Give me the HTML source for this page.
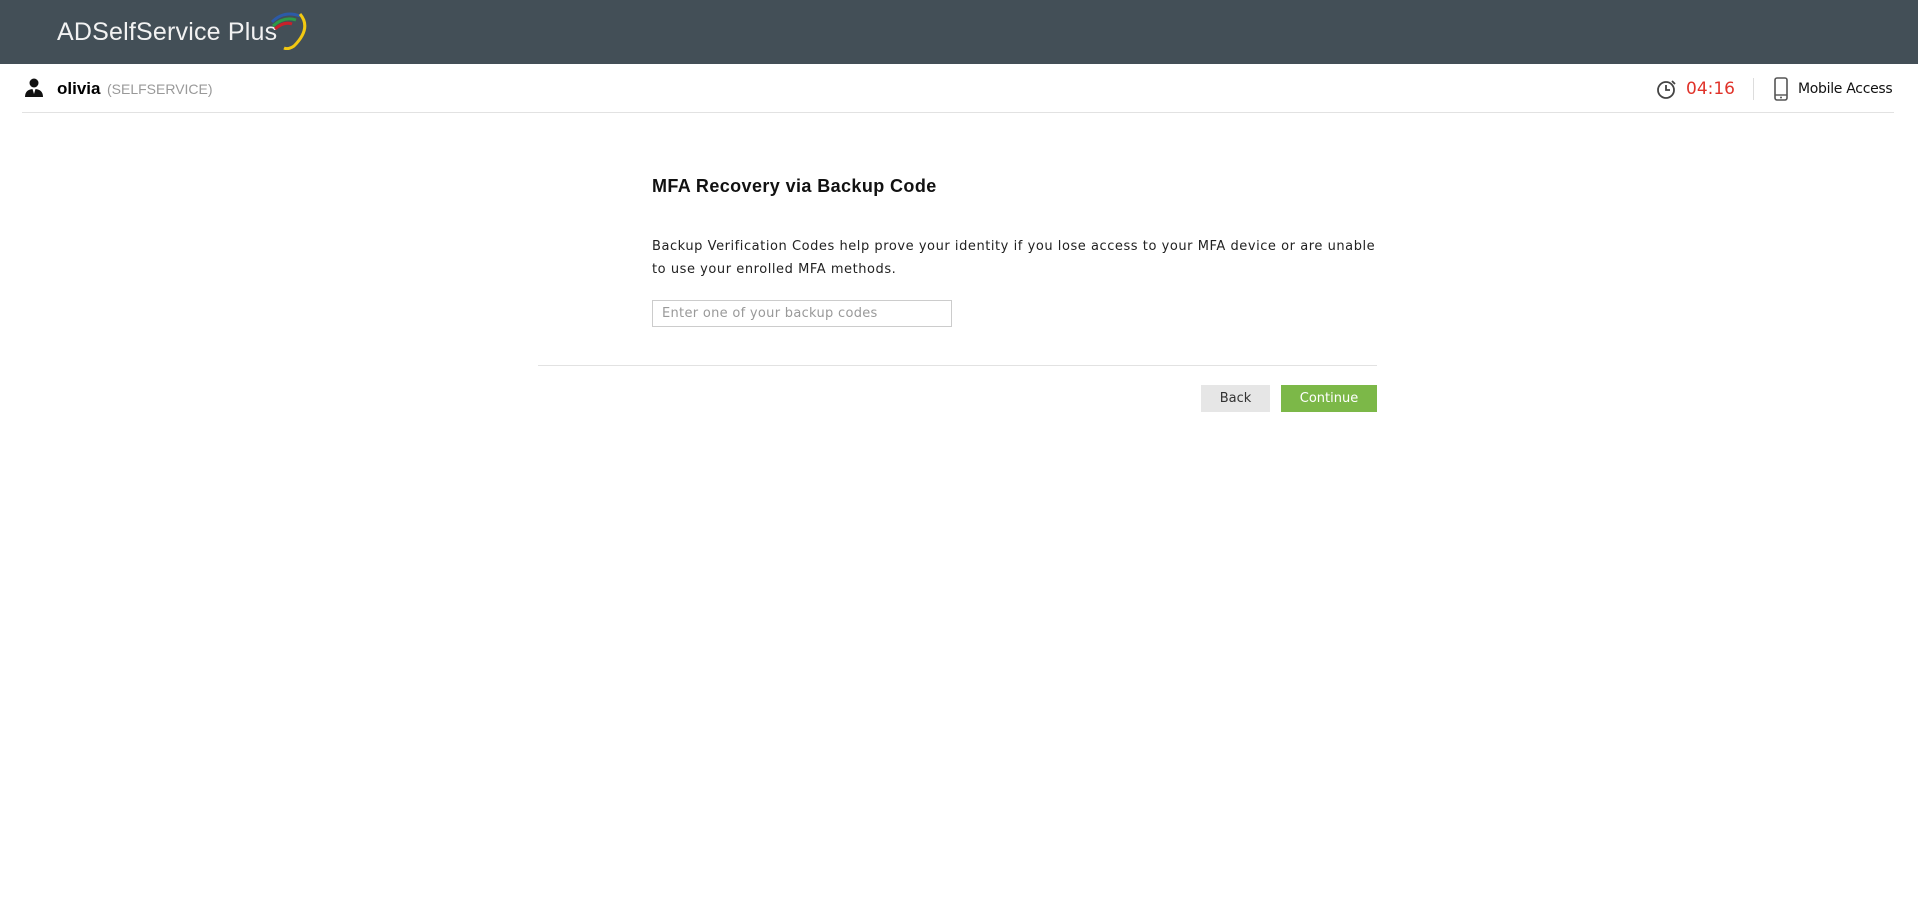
<!DOCTYPE html>
<html><head><style>
*{margin:0;padding:0;box-sizing:border-box}
body{width:1918px;height:899px;background:#fff;font-family:"Liberation Sans",Arial,sans-serif;position:relative;overflow:hidden}
.hdr{position:absolute;left:0;top:0;width:1918px;height:64px;background:#434f57}
.logo{position:absolute;left:57px;top:18px;color:#f2f2f2;font-size:25px;letter-spacing:0.2px}
.abs{position:absolute}
</style></head><body>
<div class="hdr">
<div class="logo">ADSelfService Plus</div>
<svg class="abs" style="left:264px;top:6px" width="46" height="44" viewBox="0 0 46 44">
<path d="M8 16 Q20 4 36 10" stroke="#2c5aa8" stroke-width="3" fill="none"/>
<path d="M9 20 Q20 10 32 14" stroke="#2e9a48" stroke-width="3" fill="none"/>
<path d="M11 23 Q20 15 28 18" stroke="#c8202a" stroke-width="3" fill="none"/>
<path d="M36 8 Q48 22 30 40 Q24 44 20 42" stroke="#f2c811" stroke-width="3" fill="none"/>
</svg>
</div>
<svg class="abs" style="left:24px;top:78px" width="20" height="20" viewBox="0 0 20 20">
<circle cx="10" cy="5" r="4.5" fill="#111"/>
<path d="M1 19 Q1 11 10 11 Q19 11 19 19Z" fill="#111"/>
<path d="M8.5 11 L10 16 L11.5 11Z" fill="#fff"/>
</svg>
<div class="abs" style="left:57px;top:79px;font-size:17px;font-weight:bold;color:#000">olivia</div>
<div class="abs" style="left:107px;top:81px;font-size:14px;color:#999">(SELFSERVICE)</div>
<svg class="abs" style="left:1656px;top:78px" width="22" height="22" viewBox="0 0 22 22">
<circle cx="10" cy="12" r="8" stroke="#444" stroke-width="1.8" fill="none"/>
<path d="M10 7 V12 H14" stroke="#444" stroke-width="1.8" fill="none"/>
<path d="M16 3 L19 6" stroke="#444" stroke-width="1.8"/>
</svg>
<div class="abs" style="left:1686px;top:79px;font-size:17px;color:#e0332a;font-family:'DejaVu Sans',sans-serif">04:16</div>
<div class="abs" style="left:1753px;top:78px;width:1px;height:22px;background:#ddd"></div>
<svg class="abs" style="left:1774px;top:77px" width="14" height="24" viewBox="0 0 14 24">
<rect x="1" y="1" width="12" height="22" rx="2" stroke="#555" stroke-width="1.6" fill="none"/>
<line x1="1" y1="18" x2="13" y2="18" stroke="#555" stroke-width="1.4"/>
<circle cx="7" cy="20.5" r="1" fill="#555"/>
</svg>
<div class="abs" style="left:1798px;top:81px;font-size:14px;color:#111;font-family:'DejaVu Sans',sans-serif;letter-spacing:-0.3px">Mobile Access</div>
<div class="abs" style="left:22px;top:112px;width:1872px;height:1px;background:#e2e2e2"></div>

<div class="abs" style="left:652px;top:176px;font-size:18px;font-weight:bold;color:#111;letter-spacing:0.4px">MFA Recovery via Backup Code</div>
<div class="abs" style="left:652px;top:235px;width:760px;font-size:13px;line-height:23px;color:#222;font-family:'DejaVu Sans',sans-serif;letter-spacing:0.55px">Backup Verification Codes help prove your identity if you lose access to your MFA device or are unable<br>to use your enrolled MFA methods.</div>
<div class="abs" style="left:652px;top:300px;width:300px;height:27px;border:1px solid #ccc;padding-left:9px;line-height:25px;font-size:13px;color:#999;font-family:'DejaVu Sans',sans-serif;letter-spacing:0.3px">Enter one of your backup codes</div>
<div class="abs" style="left:538px;top:365px;width:839px;height:1px;background:#e2e2e2"></div>
<div class="abs" style="left:1201px;top:385px;width:69px;height:27px;background:#e6e6e6;color:#333;font-size:13px;line-height:27px;text-align:center;font-family:'DejaVu Sans',sans-serif">Back</div>
<div class="abs" style="left:1281px;top:385px;width:96px;height:27px;background:#7cb848;color:#fff;font-size:13px;line-height:27px;text-align:center;font-family:'DejaVu Sans',sans-serif">Continue</div>
</body></html>
